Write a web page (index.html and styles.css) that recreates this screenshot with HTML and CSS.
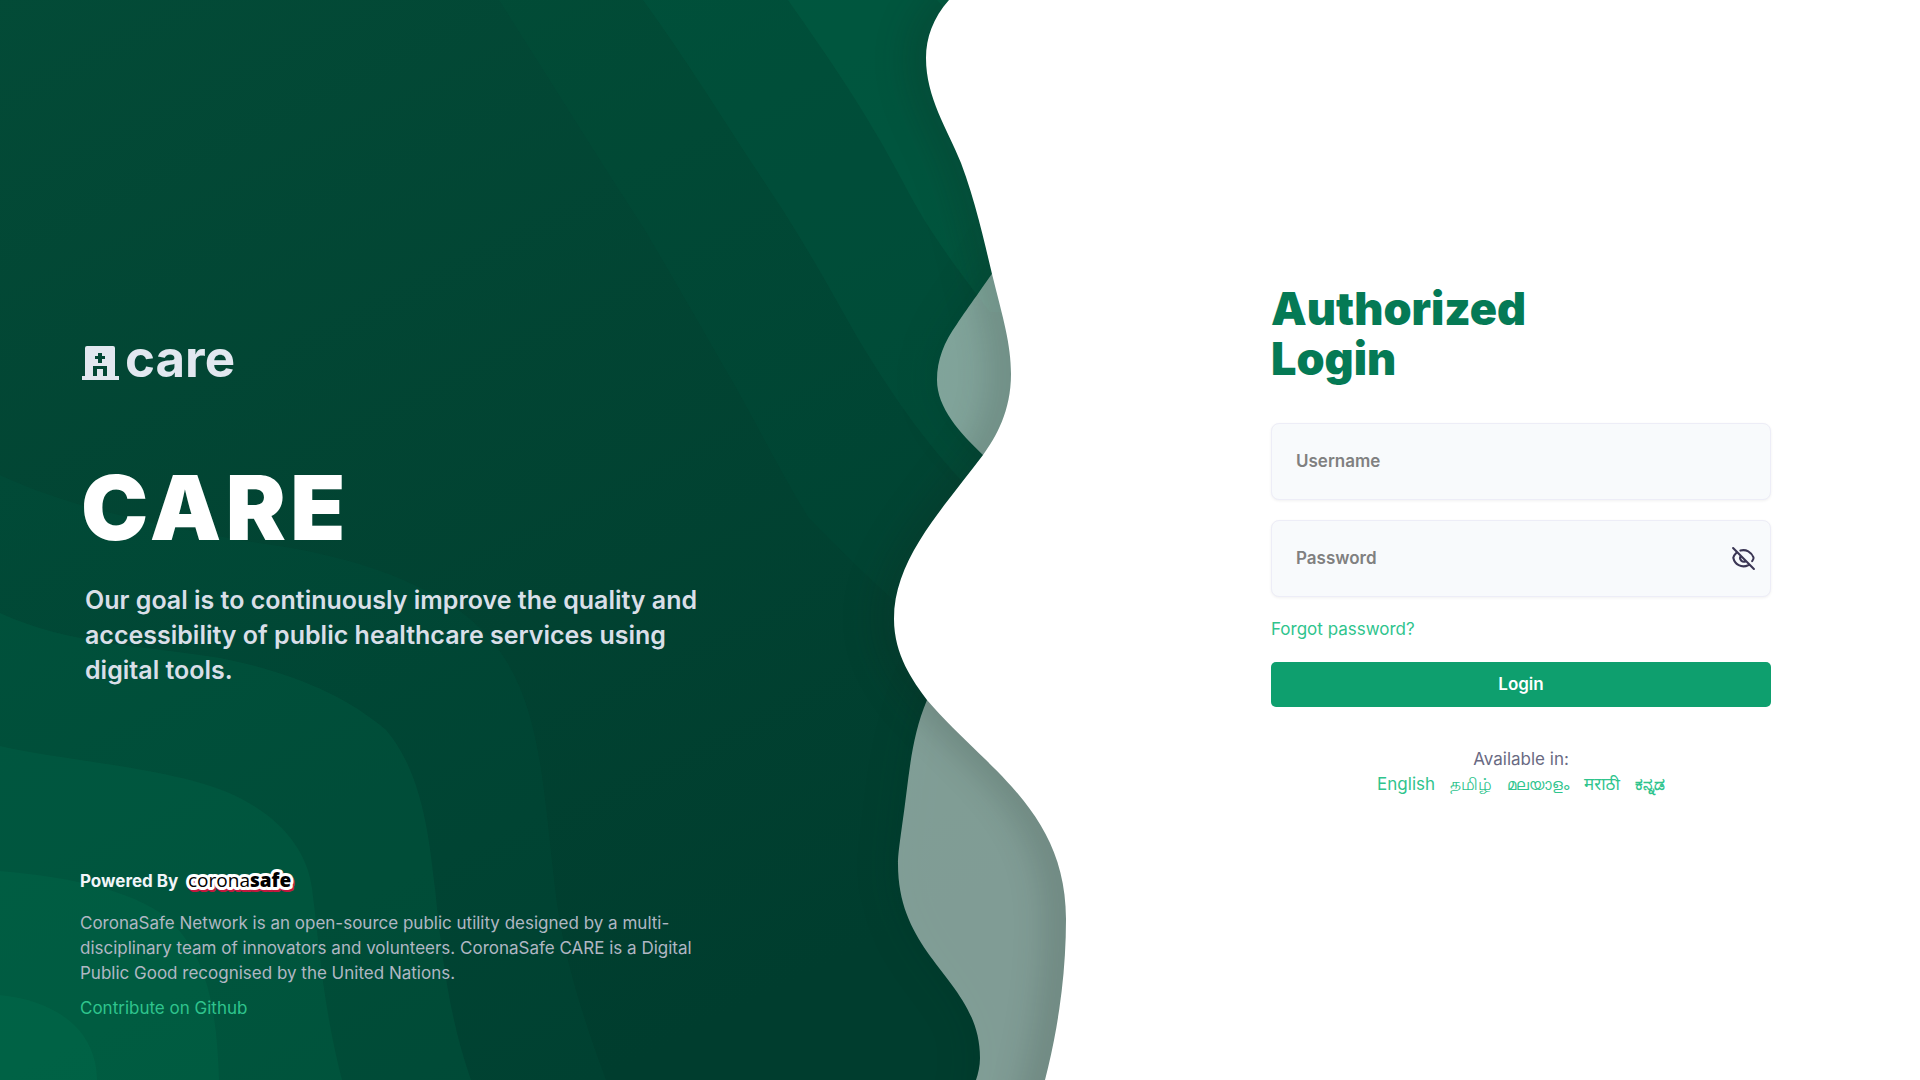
FILE: index.html
```html
<!DOCTYPE html>
<html lang="en">
<head>
  <meta charset="utf-8">
  <meta name="viewport" content="width=device-width, initial-scale=1">
  <title>CARE</title>
  <link rel="stylesheet" href="styles.css">
</head>
<body>
  <svg class="backdrop" viewBox="0 0 1920 1080" preserveAspectRatio="xMinYMin slice" aria-hidden="true">
    <defs>
      <linearGradient id="base" gradientUnits="userSpaceOnUse" x1="200" y1="-120" x2="760" y2="1000">
        <stop offset="0" stop-color="#034b37"/>
        <stop offset="1" stop-color="#003d2e"/>
      </linearGradient>
      <filter id="shade" filterUnits="userSpaceOnUse" x="700" y="-200" width="1400" height="1500" color-interpolation-filters="sRGB">
        <feDropShadow dx="-24" dy="0" stdDeviation="14" flood-color="#18201c" flood-opacity="0.14"/>
      </filter>
      <filter id="soft" filterUnits="userSpaceOnUse" x="700" y="-200" width="700" height="1500" color-interpolation-filters="sRGB">
        <feGaussianBlur stdDeviation="20"/>
      </filter>
    </defs>
    <rect width="1920" height="1080" fill="url(#base)"/>
    <g fill="#009a6c" fill-opacity="0.1">
      <path fill-opacity="0.05" d="M0 475C60 503 130 520 245 541C330 552 400 570 460 611C540 670 540 760 555 888C562 950 580 1010 606 1080H0Z"/>
      <path d="M0 613C70 645 140 645 220 658C290 672 345 695 386 730C425 775 430 850 435 888C442 960 450 1020 471 1080H0Z"/>
      <path d="M0 746C60 760 170 768 227 792C280 815 307 850 312 888C320 950 322 1000 342 1080H0Z"/>
      <path d="M0 871C60 876 120 887 159 912C205 945 217 1005 219 1080H0Z"/>
      <path d="M0 995C50 1000 96 1025 97 1080H0Z"/>
      <path fill-opacity="0.04" d="M499 0C550 80 590 145 643 227C680 290 700 325 735 386C765 440 785 480 808 517C840 550 870 580 910 615H1100V0Z"/>
      <path fill-opacity="0.07" d="M643 0C690 65 720 115 765 183C800 235 825 280 857 337C895 400 930 450 980 500H1100V0Z"/>
      <path d="M788 0C830 60 865 110 903 182C925 225 950 260 990 312H1100V0Z"/>
      <path d="M937 0L950 14V0Z"/>
    </g>
    <path class="wave-shadow" filter="url(#soft)" d="M1010 240C992 274 970 304 957 324C944 342 937 360 937 380C937 408 960 433 983 455L1100 560V640H960C940 665 932 685 927 700C910 745 908 780 902 826C899 848 898 856 898 864C898 960 980 980 980 1058C980 1066 978 1074 976 1080V1140H1300V200Z"/>
    <path class="wave-veil" d="M1012 244C980 292 966 310 957 324C944 342 937 360 937 380C937 408 960 433 983 455L1100 560V640H960C940 665 932 685 927 700C910 740 909 780 902 826C899 848 898 856 898 864C898 960 980 980 980 1058C980 1066 978 1074 976 1080H1300V244Z"/>
    <path filter="url(#shade)" fill="#fff" d="M1000 -60C985 -35 968 -22 949 0C933 18 926 38 926 58C926 98 947 128 961 163C975 200 984 240 992 274C1003 318 1011 344 1011 374C1011 411 996 437 983 455C940 512 894 560 894 619C894 655 913 681 927 700C985 768 1066 810 1066 919C1066 975 1058 1030 1045 1080L1024 1150H1980V-60Z"/>
  </svg>

  <main class="page">
    <section class="intro">
      <div class="intro-body">
        <div class="logo">
          <svg class="logo-icon" viewBox="0 0 37 34" aria-hidden="true">
            <path fill-rule="evenodd" d="M5 0H31Q33 0 33 2V30H37V34H0V30H3V2Q3 0 5 0ZM16 7V10H13V13H16V17H20V13H23V10H20V7ZM11 20V30H15V23H21V30H25V20Z"/>
          </svg>
          <span>care</span>
        </div>
        <h1 class="brand">CARE</h1>
        <p class="goal">Our goal is to continuously improve the quality and accessibility of public healthcare services using digital tools.</p>
      </div>
      <footer class="about">
        <div class="powered">
          <span>Powered By</span>
          <svg class="corona" viewBox="0 0 110 26" role="img" aria-label="coronasafe">
            <g class="corona-red" transform="translate(1 2)"><text x="5" y="19">corona<tspan class="heavy">safe</tspan></text></g>
            <g class="corona-white"><text x="5" y="19">corona<tspan class="heavy">safe</tspan></text></g>
            <text x="5" y="19">corona<tspan class="heavy">safe</tspan></text>
          </svg>
        </div>
        <p class="about-text">CoronaSafe Network is an open-source public utility designed by a multi-disciplinary team of innovators and volunteers. CoronaSafe CARE is a Digital Public Good recognised by the United Nations.</p>
        <a class="github" href="#">Contribute on Github</a>
      </footer>
    </section>

    <section class="access">
      <form class="login">
        <h2 class="title">Authorized<br>Login</h2>
        <div class="field">
          <input type="text" id="username" aria-label="Username" placeholder="Username">
        </div>
        <div class="field">
          <input type="password" id="password" aria-label="Password" placeholder="Password">
          <button class="reveal" type="button" aria-label="Show password">
            <svg viewBox="0 0 24 24" aria-hidden="true">
              <path d="M2 2L22 22M9 4.4C14.500 2.800 19.500 6 21.600 11C21.900 12 21.300 13.300 20.300 14.600M5 6.800C3.600 8.200 2.600 9.700 2.200 11.200C3.500 17.500 10 21.500 16.500 18.500M9.200 9.600C7.500 13 11 16.500 14.500 14.500"/>
            </svg>
          </button>
        </div>
        <a class="forgot" href="#">Forgot password?</a>
        <button class="submit" type="submit">Login</button>
        <div class="languages">
          <span>Available in:</span>
          <nav class="language-list" aria-label="Languages">
            <a href="#">English</a>
            <a href="#">தமிழ்</a>
            <a href="#" class="malayalam">മലയാളം</a>
            <a href="#">मराठी</a>
            <a href="#" class="kannada">ಕನ್ನಡ</a>
          </nav>
        </div>
      </form>
    </section>
  </main>
</body>
</html>
```
FILE: styles.css
```css
* {
  box-sizing: border-box;
}

body {
  margin: 0;
  background: #fff;
  color: #696a83;
  font: 400 17px/25px Inter, system-ui, sans-serif;
}

h1,
h2,
p {
  margin: 0;
}

a {
  color: #2fc48d;
  text-decoration: none;
}

.backdrop {
  position: absolute;
  inset: 0;
  width: 100%;
  height: 100%;
  z-index: -1;
}

.wave-shadow {
  fill: #00251a;
  fill-opacity: 0.16;
}

.wave-veil {
  fill: #fff;
  fill-opacity: 0.5;
}

.page {
  display: grid;
  grid-template-columns: 7fr 5fr;
  min-height: 100vh;
}

.intro {
  display: flex;
  flex-direction: column;
  justify-content: space-between;
  padding: 0 80px 59px;
}

.intro-body {
  padding-top: 329px;
}

.logo {
  display: flex;
  align-items: center;
  gap: 6px;
  padding-left: 2px;
  color: #e2e8f0;
  font-size: 51px;
  font-weight: 700;
  line-height: 60px;
}

.logo-icon {
  width: 37px;
  height: 34px;
  margin-top: 8px;
  fill: currentColor;
}

.brand {
  margin-top: 74px;
  padding-left: 1px;
  color: #fff;
  font-size: 90px;
  font-weight: 900;
  line-height: 90px;
  letter-spacing: 0.05em;
}

.goal {
  max-width: 640px;
  margin-top: 30px;
  padding-left: 5px;
  color: #d9dfe8;
  font-size: 25px;
  font-weight: 600;
  line-height: 35px;
}

.about {
  display: flex;
  flex-direction: column;
  align-items: flex-start;
  max-width: 640px;
}

.powered {
  display: flex;
  align-items: center;
  gap: 5px;
  color: #f1f5f9;
  font-weight: 700;
}

.corona {
  width: 110px;
  height: 26px;
  overflow: visible;
  font: 400 19px "Open Sans", sans-serif;
}

.corona .heavy {
  font-weight: 800;
}

.corona-red,
.corona-white {
  stroke-width: 6px;
  stroke-linejoin: round;
}

.corona-red {
  fill: #c2183e;
  stroke: #c2183e;
}

.corona-white {
  fill: #fff;
  stroke: #fff;
}

.about-text {
  margin-top: 17px;
  color: #b0b7c3;
}

.github {
  margin-top: 10px;
}

.access {
  display: flex;
  align-items: center;
  justify-content: center;
  padding: 40px 40px 40px 42px;
}

.login {
  display: flex;
  flex-direction: column;
  width: 100%;
  max-width: 500px;
}

.title {
  margin-bottom: 39px;
  color: #057a55;
  font-size: 45px;
  font-weight: 900;
  line-height: 50px;
}

.field {
  position: relative;
  margin-bottom: 20px;
}

.field input {
  display: block;
  width: 100%;
  height: 77px;
  padding: 0 24px;
  border: 1px solid #ededf7;
  border-radius: 8px;
  background: #f8fafc;
  box-shadow: 0 1px 3px rgba(0, 0, 0, 0.06);
  color: #27272a;
  font: 600 17px/25px Inter, sans-serif;
}

.field input::placeholder {
  color: #808080;
  opacity: 1;
}

.reveal {
  position: absolute;
  top: 0;
  bottom: 0;
  right: 15px;
  display: flex;
  align-items: center;
  padding: 0;
  border: 0;
  background: none;
  color: #3b3654;
}

.reveal svg {
  width: 25px;
  height: 25px;
  fill: none;
  stroke: currentColor;
  stroke-width: 2;
  stroke-linecap: round;
}

.forgot {
  align-self: flex-start;
}

.submit {
  height: 45px;
  margin-top: 20px;
  border: 0;
  border-radius: 5px;
  background: #0e9f6e;
  color: #fff;
  font: 600 17px/25px Inter, sans-serif;
}

.languages {
  display: flex;
  flex-direction: column;
  align-items: center;
  margin-top: 40px;
}

.language-list {
  display: flex;
  gap: 15px;
  height: 25px;
}

.malayalam {
  font-size: 15px;
}

.kannada {
  font-weight: 700;
}
```
